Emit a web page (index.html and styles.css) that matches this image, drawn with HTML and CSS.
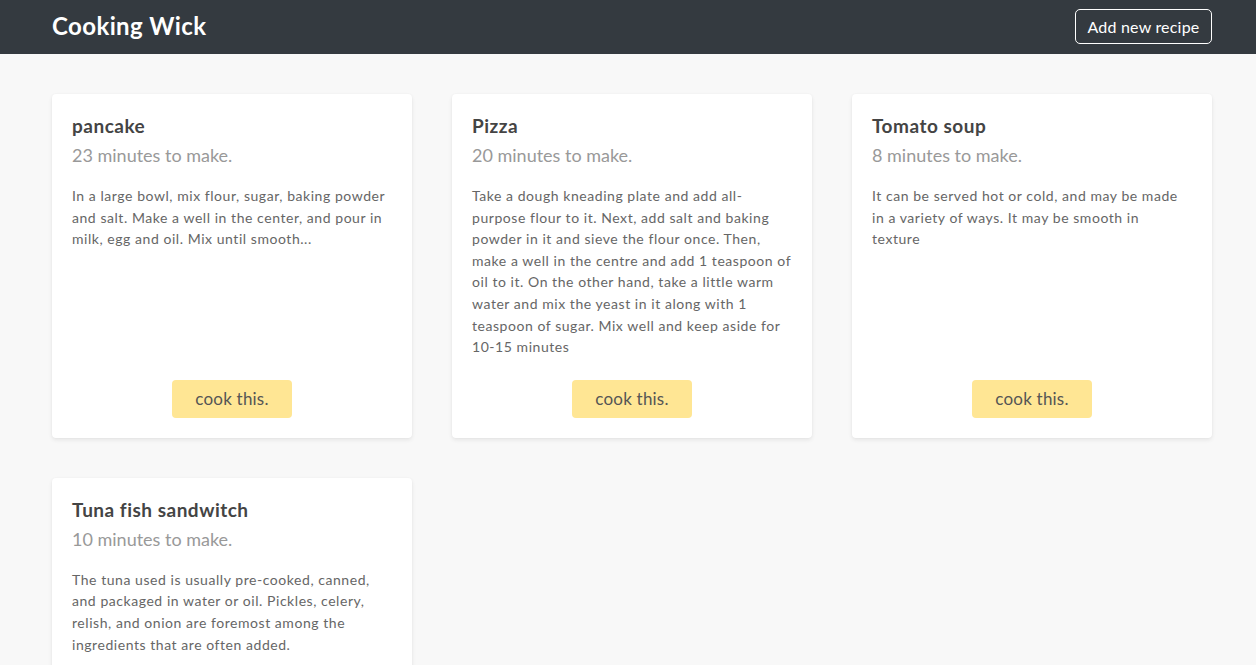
FILE: index.html
```html
<!DOCTYPE html>
<html lang="en">
<head>
<meta charset="utf-8">
<title>Cooking Wick</title>
<link rel="stylesheet" href="styles.css">
</head>
<body>
<header class="navbar">
  <div class="nav-inner">
    <a class="brand" href="#">Cooking Wick</a>
    <a class="btn-outline" href="#">Add new recipe</a>
  </div>
</header>
<main class="grid">
  <article class="card">
    <h2 class="card-title">pancake</h2>
    <p class="card-time">23 minutes to make.</p>
    <p class="card-text">In a large bowl, mix flour, sugar, baking powder and salt. Make a well in the center, and pour in milk, egg and oil. Mix until smooth...</p>
    <a class="btn-cook" href="#">cook this.</a>
  </article>
  <article class="card">
    <h2 class="card-title">Pizza</h2>
    <p class="card-time">20 minutes to make.</p>
    <p class="card-text">Take a dough kneading plate and add all-purpose flour to it. Next, add salt and baking powder in it and sieve the flour once. Then, make a well in the centre and add 1 teaspoon of oil to it. On the other hand, take a little warm water and mix the yeast in it along with 1 teaspoon of sugar. Mix well and keep aside for 10-15 minutes</p>
    <a class="btn-cook" href="#">cook this.</a>
  </article>
  <article class="card">
    <h2 class="card-title">Tomato soup</h2>
    <p class="card-time">8 minutes to make.</p>
    <p class="card-text">It can be served hot or cold, and may be made in a variety of ways. It may be smooth in<br>texture</p>
    <a class="btn-cook" href="#">cook this.</a>
  </article>
  <article class="card">
    <h2 class="card-title">Tuna fish sandwitch</h2>
    <p class="card-time">10 minutes to make.</p>
    <p class="card-text">The tuna used is usually pre-cooked, canned, and packaged in water or oil. Pickles, celery, relish, and onion are foremost among the ingredients that are often added.</p>
    <a class="btn-cook" href="#">cook this.</a>
  </article>
</main>
</body>
</html>
```
FILE: styles.css
```css
* { box-sizing: border-box; }
html, body { margin: 0; padding: 0; }
body {
  background: #f8f8f8;
  font-family: "Lato", "Noto Sans", sans-serif;
  color: #555;
}
.navbar {
  background: #343a40;
  height: 54px;
}
.nav-inner {
  height: 100%;
  padding: 0 44px 0 52px;
  display: flex;
  align-items: center;
  justify-content: space-between;
}
.brand {
  color: #fff;
  text-decoration: none;
  font-size: 24px;
  font-weight: 700;
  letter-spacing: 0.4px;
  line-height: 28px;
  margin-top: -3px;
}
.btn-outline {
  color: #fff;
  text-decoration: none;
  border: 1px solid #fff;
  border-radius: 5px;
  font-size: 16px;
  letter-spacing: 0.2px;
  height: 35px;
  width: 137px;
  margin-top: -2px;
  display: flex;
  align-items: center;
  justify-content: center;
}
.grid {
  display: grid;
  grid-template-columns: repeat(3, 360px);
  column-gap: 40px;
  row-gap: 40px;
  padding: 40px 0 40px 52px;
}
.card {
  background: #fff;
  border-radius: 4px;
  box-shadow: 0 2px 4px rgba(0,0,0,0.08), 0 0 2px rgba(0,0,0,0.04);
  padding: 20px;
  min-height: 342px;
  display: flex;
  flex-direction: column;
}
.card-title {
  margin: 0;
  font-size: 19px;
  font-weight: 700;
  letter-spacing: 0.5px;
  color: #444;
  line-height: 24px;
}
.card-time {
  margin: 5px 0 0;
  font-size: 18px;
  color: #999;
  line-height: 24px;
}
.card-text {
  margin: 18px 0 22px;
  font-size: 14px;
  line-height: 21.6px;
  letter-spacing: 0.55px;
  color: #666;
}
.btn-cook {
  margin: auto auto 0;
  width: 120px;
  height: 38px;
  display: flex;
  align-items: center;
  justify-content: center;
  background: #ffe694;
  color: #555;
  text-decoration: none;
  font-size: 17px;
  letter-spacing: 0.2px;
  border-radius: 4px;
}
```
